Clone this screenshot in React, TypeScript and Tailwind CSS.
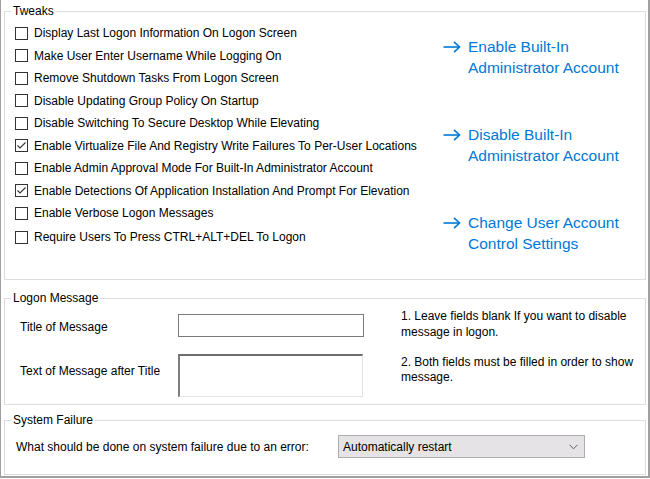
import React from "react";

const tweaks: { label: string; checked: boolean }[] = [
  { label: "Display Last Logon Information On Logon Screen", checked: false },
  { label: "Make User Enter Username While Logging On", checked: false },
  { label: "Remove Shutdown Tasks From Logon Screen", checked: false },
  { label: "Disable Updating Group Policy On Startup", checked: false },
  { label: "Disable Switching To Secure Desktop While Elevating", checked: false },
  { label: "Enable Virtualize File And Registry Write Failures To Per-User Locations", checked: true },
  { label: "Enable Admin Approval Mode For Built-In Administrator Account", checked: false },
  { label: "Enable Detections Of Application Installation And Prompt For Elevation", checked: true },
  { label: "Enable Verbose Logon Messages", checked: false },
  { label: "Require Users To Press CTRL+ALT+DEL To Logon", checked: false },
];

const links: [string, string][] = [
  ["Enable Built-In", "Administrator Account"],
  ["Disable Built-In", "Administrator Account"],
  ["Change User Account", "Control Settings"],
];

function Checkbox({ checked }: { checked: boolean }) {
  return (
    <div className="w-[13px] h-[13px] border border-[#333333] bg-white shrink-0 flex items-center justify-center">
      {checked && (
        <svg width="11" height="11" viewBox="0 0 11 11">
          <polyline points="1.5,5.5 4,8 9.5,2.5" fill="none" stroke="#333333" strokeWidth="1.1" />
        </svg>
      )}
    </div>
  );
}

function Arrow() {
  return (
    <svg width="18" height="12" viewBox="0 0 18 12" className="shrink-0 mt-[5px]">
      <line x1="0.5" y1="6" x2="16.5" y2="6" stroke="#0078d7" strokeWidth="1.6" />
      <polyline points="11,0.8 16.5,6 11,11.2" fill="none" stroke="#0078d7" strokeWidth="1.6" />
    </svg>
  );
}

export default function App() {
  return (
    <div className="w-[650px] h-[479px] bg-white text-[12px] text-black font-['Liberation_Sans',Arial,sans-serif]">
      <div className="w-[650px] h-[478px] border-l border-r-2 border-b-2 border-[#a0a0a0] pl-[3px] pr-[2px] pt-[3px] flex flex-col">
        {/* Tweaks */}
        <fieldset className="border border-[#dcdcdc] h-[277px] min-w-0">
          <legend className="ml-[6px] px-[2px] leading-[16px]">Tweaks</legend>
          <div className="flex pl-[10px] pt-[3px]">
            <div className="w-[428px] flex flex-col">
              {tweaks.map((t, i) => (
                <div
                  key={t.label}
                  className={`h-[22.5px] flex items-center gap-[6px] whitespace-nowrap ${i === 9 ? "mt-[1.5px]" : ""}`}
                >
                  <Checkbox checked={t.checked} />
                  <span>{t.label}</span>
                </div>
              ))}
            </div>
            <div className="flex-1 flex flex-col gap-[46px] pt-[13.5px]">
              {links.map(([a, b]) => (
                <div key={a + b} className="flex items-start gap-[7px] text-[15.5px] leading-[21px] text-[#0078d7]">
                  <Arrow />
                  <div>
                    <div>{a}</div>
                    <div>{b}</div>
                  </div>
                </div>
              ))}
            </div>
          </div>
        </fieldset>

        {/* Logon Message */}
        <fieldset className="border border-[#dcdcdc] h-[115px] mt-[10px] min-w-0">
          <legend className="ml-[6px] px-[2px] leading-[16px]">Logon Message</legend>
          <div className="flex">
            <div className="w-[396px] pl-[15px] pt-[8px] flex flex-col">
              <div className="flex items-center h-[23px]">
                <div className="w-[158px] pt-[2px]">Title of Message</div>
                <div className="w-[186px] h-[23px] border border-[#7a7a7a] bg-white" />
              </div>
              <div className="flex items-start mt-[17px]">
                <div className="w-[158px] pt-[9px] leading-[16px]">Text of Message after Title</div>
                <div className="w-[185px] h-[43px] border-t-2 border-l-2 border-r border-b border-t-[#6e6e6e] border-l-[#7d7d7d] border-r-[#e3e3e3] border-b-[#e3e3e3] bg-white" />
              </div>
            </div>
            <div className="w-[240px] pt-[3px] leading-[15.5px]">
              <div>1. Leave fields blank If you want to disable message in logon.</div>
              <div className="mt-[14.5px]">2. Both fields must be filled in order to show message.</div>
            </div>
          </div>
        </fieldset>

        {/* System Failure */}
        <fieldset className="border border-[#dcdcdc] h-[63px] mt-[7px] min-w-0">
          <legend className="ml-[6px] px-[2px] leading-[16px]">System Failure</legend>
          <div className="flex items-center pl-[11px] pt-[7px]">
            <div className="w-[322px] pt-[1px]">What should be done on system failure due to an error:</div>
            <div className="w-[247px] h-[23px] border border-[#adadad] bg-[#e5e3e5] flex items-center justify-between pl-[4px] pr-[6px]">
              <span>Automatically restart</span>
              <svg width="9" height="6" viewBox="0 0 9 6">
                <polyline points="0.5,0.8 4.5,4.8 8.5,0.8" fill="none" stroke="#606060" strokeWidth="1" />
              </svg>
            </div>
          </div>
        </fieldset>
      </div>
    </div>
  );
}
